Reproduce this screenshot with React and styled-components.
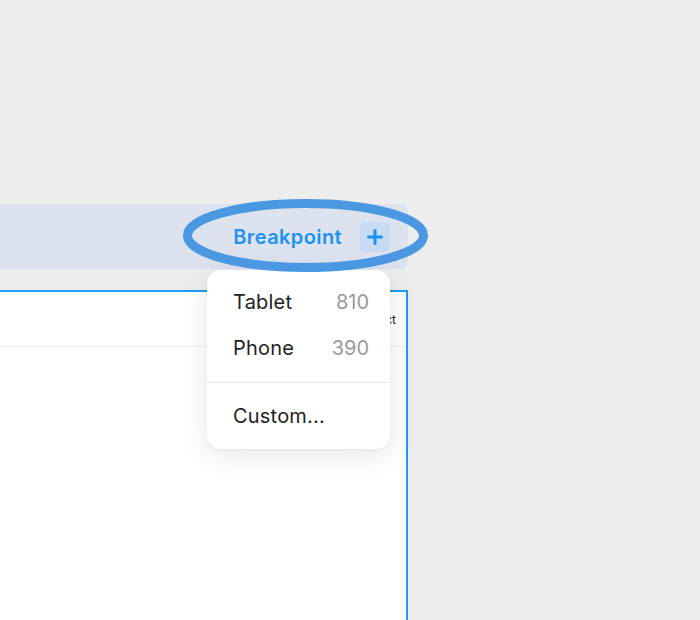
import React from "react"
import styled, { createGlobalStyle } from "styled-components"

const GlobalStyle = createGlobalStyle`
  html, body {
    margin: 0;
    background: #EDEDED;
    font-family: Inter, "Noto Sans", sans-serif;
  }
`

const Canvas = styled.div`
  position: relative;
  width: 700px;
  height: 620px;
  overflow: hidden;
  padding-top: 204px;
  box-sizing: border-box;
`

const BreakpointBar = styled.div`
  width: 408px;
  height: 65px;
  background: #DCE3EE;
  border-radius: 0 8px 8px 0;
  display: flex;
  justify-content: flex-end;
  align-items: center;
  gap: 18px;
  padding-right: 18px;
  box-sizing: border-box;
`

const BarLabel = styled.span`
  color: #1C92F4;
  font-weight: 600;
  font-size: 20px;
  letter-spacing: 0.4px;
`

const AddButton = styled.button`
  width: 30px;
  height: 30px;
  border: none;
  border-radius: 5px;
  background: #C7DCF3;
  display: flex;
  align-items: center;
  justify-content: center;
  padding: 0;
`

const Frame = styled.div`
  margin-top: 21px;
  margin-left: -10px;
  width: 418px;
  height: 340px;
  background: #fff;
  border: 2px solid #1E9BF5;
  box-sizing: border-box;
`

const FrameHeader = styled.div`
  height: 54px;
  border-bottom: 1px solid #EEEEEE;
  display: flex;
  justify-content: flex-end;
  align-items: center;
  padding-right: 10px;
  font-size: 12px;
  color: #222;
`

const Menu = styled.div`
  position: absolute;
  left: 207px;
  top: 270px;
  width: 183px;
  padding: 9px 0 10px;
  background: #fff;
  border-radius: 14px;
  box-shadow: 0 6px 28px rgba(0, 0, 0, 0.10), 0 1px 4px rgba(0, 0, 0, 0.04);
  box-sizing: border-box;
`

const MenuItem = styled.div`
  height: 46px;
  display: flex;
  align-items: center;
  justify-content: space-between;
  padding: 0 21px 0 26px;
  font-size: 20px;
  letter-spacing: 0.2px;
  color: #222;
`

const Width = styled.span`
  color: #999;
  letter-spacing: 0;
`

const Divider = styled.div`
  height: 1px;
  background: #E6E6E6;
  margin: 11px 0 10px;
`

const Highlight = styled.svg`
  position: absolute;
  left: 178px;
  top: 195px;
  pointer-events: none;
`

const PlusIcon = () => (
  <svg width="16" height="16" viewBox="0 0 16 16">
    <path d="M8 1.5v13M1.5 8h13" stroke="#1C92F4" strokeWidth="3" strokeLinecap="round" />
  </svg>
)

const breakpoints = [
  { name: "Tablet", width: 810 },
  { name: "Phone", width: 390 },
]

export default function App() {
  return (
    <>
      <GlobalStyle />
      <Canvas>
        <BreakpointBar>
          <BarLabel>Breakpoint</BarLabel>
          <AddButton>
            <PlusIcon />
          </AddButton>
        </BreakpointBar>

        <Frame>
          <FrameHeader>Select</FrameHeader>
        </Frame>

        <Menu>
          {breakpoints.map((b) => (
            <MenuItem key={b.name}>
              <span>{b.name}</span>
              <Width>{b.width}</Width>
            </MenuItem>
          ))}
          <Divider />
          <MenuItem>Custom...</MenuItem>
        </Menu>

        <Highlight width="255" height="82" viewBox="0 0 255 82">
          <ellipse cx="127.5" cy="40.5" rx="118" ry="32" fill="none" stroke="#4A98E2" strokeWidth="9" />
        </Highlight>
      </Canvas>
    </>
  )
}
